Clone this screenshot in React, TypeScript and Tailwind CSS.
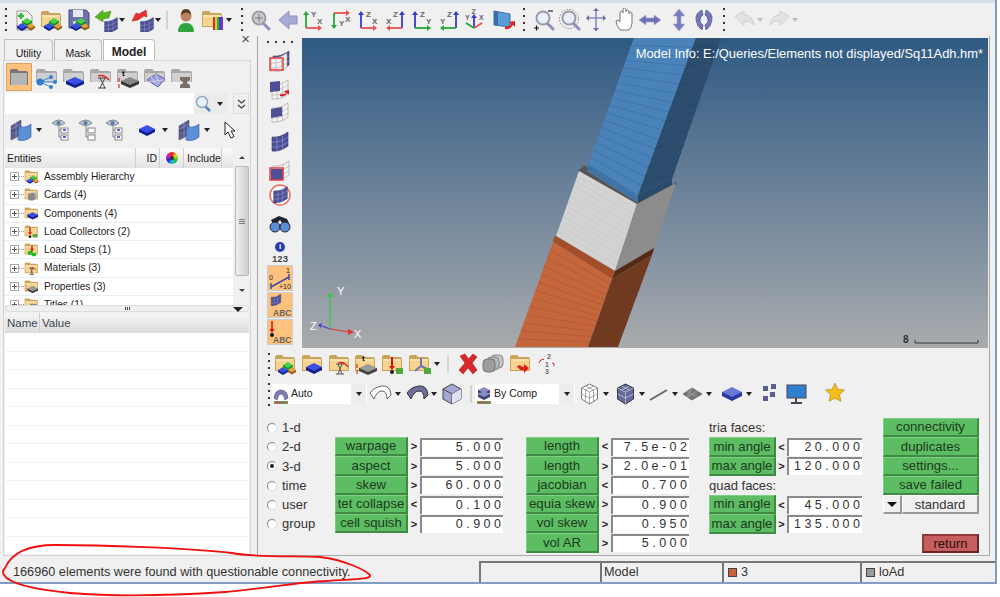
import React from "react";

type P = { className?: string };
const Svg = ({ w = 24, h = 24, vb, className, children }: { w?: number; h?: number; vb?: string; className?: string; children: React.ReactNode }) => (
  <svg width={w} height={h} viewBox={vb ?? `0 0 ${w} ${h}`} className={`shrink-0 ${className ?? ""}`}>{children}</svg>
);
const Box = ({ x, y, w = 6, h = 3, d = 3, c, k }: { x: number; y: number; w?: number; h?: number; d?: number; c: string; k: string }) => (
  <g>
    <path d={`M${x - w} ${y}V${y + d}L${x} ${y + h + d}L${x + w} ${y + d}V${y}Z`} fill={k} />
    <path d={`M${x - w} ${y}L${x} ${y - h}L${x + w} ${y}L${x} ${y + h}Z`} fill={c} />
  </g>
);
const Cubes = ({ s = 1 }: { s?: number }) => (
  <g transform={`scale(${s})`}>
    <Box x={14} y={13} w={5} h={3} d={2} c="#48d048" k="#168a20" />
    <Box x={9} y={18} w={5} h={3} d={2} c="#3a50e0" k="#101f90" />
    <Box x={18} y={18} w={4} h={2.5} d={2} c="#e0a040" k="#8a5a10" />
  </g>
);
const FolderShape = ({ c = "#f6d48e", e = "#c9a45c" }: { c?: string; e?: string }) => (
  <g>
    <path d="M1 5q0-2 2-2h5l2 2h9q2 0 2 2v12H1z" fill={e} />
    <path d="M2 7h18v11H2z" fill={c} />
    <path d="M2 8h18" stroke="#fff" strokeOpacity=".6" />
  </g>
);
const Mesh = ({ x = 0, y = 0, s = 1, ghost = false }: { x?: number; y?: number; s?: number; ghost?: boolean }) => (
  <g transform={`translate(${x} ${y}) scale(${s})`}>
    <path d="M2 7q8 1 16-5v14q-8 6-16 5z" fill={ghost ? "#f4f4f4" : "#4c4f95"} stroke={ghost ? "#999" : "#33366e"} strokeWidth=".6" />
    <path d="M7 7.5v14M12.5 6v14M2 12q8 1 16-5M2 17q8 1 16-5" stroke={ghost ? "#aaa" : "#9ea2d4"} strokeWidth=".6" fill="none" />
  </g>
);
const Flag = () => (
  <Svg w={24} h={24}>
    <path d="M2 8l10-6v7l-10 5zM2 14l10-5v8l-10 5z" fill="#5a5f90" stroke="#3b3f6c" strokeWidth=".5" />
    <path d="M7 5v14M2 11l10-5" stroke="#a6a9d2" strokeWidth=".5" />
    <path d="M10 8q6 3 12-2v13q-6 5-13 3z" fill="#5d8fd6" stroke="#2f5c9f" strokeWidth=".6" />
  </Svg>
);
const Caret = ({ className }: P) => (
  <span className={`w-0 h-0 border-l-[3.5px] border-r-[3.5px] border-t-[4px] border-l-transparent border-r-transparent border-t-[#222] shrink-0 ${className ?? ""}`} />
);
const Dots = ({ className, vert = true }: P & { vert?: boolean }) => (
  <span className={`flex shrink-0 ${vert ? "flex-col gap-[5px]" : "gap-[6px]"} ${className ?? ""}`}>
    <i className="block w-[2px] h-[2px] bg-[#333]" /><i className="block w-[2px] h-[2px] bg-[#333]" /><i className="block w-[2px] h-[2px] bg-[#333]" /><i className="block w-[2px] h-[2px] bg-[#333]" />
  </span>
);
const Sep = ({ className }: P) => <span className={`w-[2px] h-[18px] bg-[#d4d4d4] shrink-0 ${className ?? ""}`} />;

const Glass = ({ plus = false, dashed = false, rings = false }: { plus?: boolean; dashed?: boolean; rings?: boolean }) => (
  <Svg w={22} h={24}>
    {dashed && <circle cx="10" cy="11" r="9.5" fill="none" stroke="#555" strokeWidth=".7" strokeDasharray="1.5 1.5" />}
    <path d="M14 15l6 6" stroke="#8d8fc0" strokeWidth="3" strokeLinecap="round" />
    <circle cx="10" cy="10" r="6.5" fill={rings ? "#ccc" : "#e8eefc"} stroke="#9a9aa8" strokeWidth="2" />
    {rings && <path d="M10 6v8M6 10h8" stroke="#777" strokeWidth="1" />}
    {plus && <path d="M1 20h5M3.5 17.5v5" stroke="#111" strokeWidth="1.2" />}
    {plus && <path d="M15 3h5" stroke="#333" strokeWidth="1.3" />}
  </Svg>
);
const Axes = ({ v, h, vc, hc, flip = false }: { v: string; h: string; vc: string; hc: string; flip?: boolean }) => (
  <Svg w={21} h={24}>
    {flip ? (
      <g>
        <path d="M18 20V6" stroke={vc} strokeWidth="1.8" /><path d="M15 7l3-4 3 4z" fill={vc} />
        <path d="M18 20H5" stroke={hc} strokeWidth="1.8" /><path d="M6 17l-4 3 4 3z" fill={hc} />
        <text x="9" y="9" fontSize="8" fontWeight="700" fill="#666" fontFamily="Liberation Sans">{v}</text>
        <text x="2" y="16" fontSize="8" fontWeight="700" fill="#666" fontFamily="Liberation Sans">{h}</text>
      </g>
    ) : (
      <g>
        <path d="M3 20V6" stroke={vc} strokeWidth="1.8" /><path d="M0 7l3-4 3 4z" fill={vc} />
        <path d="M3 20h13" stroke={hc} strokeWidth="1.8" /><path d="M15 17l4 3-4 3z" fill={hc} />
        <text x="8" y="9" fontSize="8" fontWeight="700" fill="#666" fontFamily="Liberation Sans">{v}</text>
        <text x="14" y="16" fontSize="8" fontWeight="700" fill="#666" fontFamily="Liberation Sans">{h}</text>
      </g>
    )}
  </Svg>
);
const RED = "#e85050", GRN = "#22a83a", BLU = "#3a3ad0";

const TopBar = () => (
  <div className="h-[33px] flex items-center pl-[5px] shrink-0">
    <Dots />
    <span className="ml-[6px]"><Svg><path d="M4 3h10l5 5v14H4z" fill="#f4f4f0" stroke="#999" /><path d="M8 5v6M5 8h6" stroke="#3cb44a" strokeWidth="2.5" /><Cubes /></Svg></span>
    <span className="ml-[3px]"><Svg><FolderShape /><Cubes /></Svg></span>
    <span className="ml-[3px]"><Svg><path d="M2 2h17l3 3v15H2z" fill="#6d72a8" stroke="#44487a" /><path d="M6 2h10v7H6z" fill="#e8e8f0" /><path d="M6 13h9v8H6z" fill="#d0d0dc" /><Cubes /></Svg></span>
    <span className="ml-[3px]"><Svg w={26}><g transform="translate(9 8)"><Mesh s={0.8} /></g><path d="M1 9l8-7v3l8-2-2 7-6 1v3z" fill="#58b522" stroke="#3d8a14" strokeWidth=".5" /></Svg></span>
    <Caret className="ml-[-1px]" />
    <span className="ml-[5px]"><Svg w={26}><g transform="translate(9 8)"><Mesh s={0.8} /></g><path d="M2 13l4-8 3 1 7-4 1 7-3-1-6 4z" fill="#e83030" stroke="#a81c1c" strokeWidth=".5" /></Svg></span>
    <Caret className="ml-[-1px]" />
    <Sep className="ml-[5px]" />
    <span className="ml-[8px]"><Svg w={20}><circle cx="10" cy="8" r="5.5" fill="#b8835e" /><path d="M5 7q0-6 5-6t5 6q-2-3-5-2.5T5 7z" fill="#5c3518" /><path d="M2 24q0-9 8-9t8 9z" fill="#2fa43c" /></Svg></span>
    <span className="ml-[5px]"><Svg w={24}><FolderShape /><g><path d="M12 9h2v13h-2z" fill="#e02828" /><path d="M14 9h2v13h-2z" fill="#e8c820" /><path d="M16 9h2v13h-2z" fill="#28b038" /><path d="M18 9h2v13h-2z" fill="#2848e0" /><path d="M20 9h2v13h-2z" fill="#9028c0" /></g></Svg></span>
    <Caret className="ml-[1px]" />
    <Dots className="ml-[9px]" />
    <span className="ml-[6px]"><Glass rings /></span>
    <span className="ml-[7px]"><Svg w={20}><path d="M1 12L11 3v5h8v8h-8v5z" fill="#a9a9d8" stroke="#8d8dc0" /></Svg></span>
    <span className="ml-[5px]"><Axes v="Y" h="X" vc={GRN} hc={RED} /></span>
    <span className="ml-[7px]"><Svg w={21}><path d="M3 5v14" stroke={GRN} strokeWidth="1.8" /><path d="M0 17l3 4 3-4z" fill={GRN} /><path d="M3 5h13" stroke={RED} strokeWidth="1.8" /><path d="M15 2l4 3-4 3z" fill={RED} /><text x="8" y="18" fontSize="8" fontWeight="700" fill="#666" fontFamily="Liberation Sans">Y</text><text x="14" y="14" fontSize="8" fontWeight="700" fill="#666" fontFamily="Liberation Sans">X</text></Svg></span>
    <span className="ml-[6px]"><Axes v="Z" h="X" vc={BLU} hc={RED} /></span>
    <span className="ml-[5px]"><Axes v="Z" h="X" vc={BLU} hc={RED} flip /></span>
    <span className="ml-[7px]"><Axes v="Z" h="Y" vc={BLU} hc={GRN} /></span>
    <span className="ml-[5px]"><Axes v="Z" h="Y" vc={BLU} hc={GRN} flip /></span>
    <span className="ml-[5px]"><Svg w={21}><path d="M10 20V9" stroke={BLU} strokeWidth="1.8" /><path d="M7 10l3-4 3 4z" fill={BLU} /><path d="M10 20l8-5" stroke={RED} strokeWidth="1.8" /><path d="M10 20l-8-5" stroke={GRN} strokeWidth="1.8" /><text x="7.5" y="6" fontSize="7" fontWeight="700" fill="#666" fontFamily="Liberation Sans">Z</text><text x="1" y="12" fontSize="7" fontWeight="700" fill="#666" fontFamily="Liberation Sans">Y</text><text x="15" y="12" fontSize="7" fontWeight="700" fill="#666" fontFamily="Liberation Sans">X</text></Svg></span>
    <span className="ml-[8px]"><Svg w={23}><path d="M1 3l16 3v13l-16-2z" fill="#5a9bd8" stroke="#3d6fa8" /><path d="M1 3h4v14H1z" fill="#3a6ea8" /><path d="M12 21q5 1 8-4l2 2v-6l-6 1 2 2q-2 3-6 3z" fill="#e02020" /></Svg></span>
    <Dots className="ml-[7px]" />
    <span className="ml-[8px]"><Glass plus /></span>
    <span className="ml-[4px]"><Glass dashed /></span>
    <span className="ml-[5px]"><Svg w={20}><path d="M1 10h18M10 1v22" stroke="#8a8ac0" strokeWidth="1.6" /><path d="M3 7l-3 3 3 3zM17 7l3 3-3 3zM7 3l3-3 3 3zM7 20l3 3 3-3z" fill="#6a6aa8" /></Svg></span>
    <span className="ml-[8px]"><Svg w={21}><path d="M6 22q-4-5-4-9l2-1 2 2V5q0-2 1.500-2T9 5V2q0-2 1.500-2T12 2v2q0-2 1.500-2T15 4v2q0-2 1.500-2T18 6v9q0 4-3 7z" fill="#fff" stroke="#777" strokeWidth="1" /></Svg></span>
    <span className="ml-[4px]"><Svg w={22}><path d="M0 12l7-5v3h8V7l7 5-7 5v-3H7v3z" fill="#6f70b8" stroke="#a9a9d8" strokeWidth=".6" /></Svg></span>
    <span className="ml-[11px]"><Svg w={14}><path d="M7 1l6 7H9v8h4l-6 7-6-7h4V8H1z" fill="#7a7bbd" stroke="#a9a9d8" strokeWidth=".6" /></Svg></span>
    <span className="ml-[8px]"><Svg w={20}><path d="M8 2Q1 5 2 12t6 10l1-5q-3-2-3-5t3-5zM12 2q7 3 6 10t-6 10l-1-5q3-2 3-5t-3-5z" fill="#7476b8" stroke="#4d4f8a" strokeWidth=".6" /></Svg></span>
    <Dots className="ml-[9px]" />
    <span className="ml-[8px]"><Svg w={24}><path d="M2 8l9-5v4q9 0 10 10-4-5-10-4v5z" fill="#e2e4e4" stroke="#d0d2d2" /></Svg></span>
    <Caret className="opacity-25" />
    <span className="ml-[4px]"><Svg w={24}><path d="M22 8l-9-5v4q-9 0-10 10 4-5 10-4v5z" fill="#e2e4e4" stroke="#d0d2d2" /></Svg></span>
    <Caret className="ml-[1px] opacity-25" />
  </div>
);

const GF = ({ children }: { children?: React.ReactNode }) => (
  <Svg w={24} h={26}>
    <path d="M1 7q0-2 2-2h6l2 2h9q2 0 2 2v9H1z" fill="#a8a8a8" />
    <path d="M2 9h19v9H2z" fill="#cfcfcf" />
    {children}
  </Svg>
);
const PanelIcons = () => (
  <div className="h-[30px] flex items-center pl-[2px]">
    <span className="w-[26px] h-[28px] bg-[#fdc27e] border border-[#d8a566] flex items-center justify-center shrink-0">
      <Svg w={20} h={20}><path d="M1 4q0-2 2-2h5l2 2h7q2 0 2 2v12H1z" fill="#777" /><rect x="2" y="6" width="16" height="12" fill="#b5b5b5" /></Svg>
    </span>
    <span className="ml-[3px]"><GF><path d="M5 18L16 13M5 18h13M5 18l11 5" stroke="#2d7fd0" strokeWidth="1" /><circle cx="5" cy="18" r="3.500" fill="#2d7fd0" /><circle cx="16" cy="13" r="2" fill="#2d7fd0" /><circle cx="20" cy="18" r="2" fill="#2d7fd0" /><circle cx="16" cy="23" r="2" fill="#2d7fd0" /></GF></span>
    <span className="ml-[3px]"><GF><Box x={13} y={17} w={9} h={4} d={3} c="#3a4fe6" k="#101f90" /></GF></span>
    <span className="ml-[3px]"><GF><path d="M9 12q6-2 11 4" stroke="#e02020" strokeWidth="1.300" fill="none" /><path d="M9 14h8M9 24h8M11 14l5 10M16 14l-5 10" stroke="#444" strokeWidth="1" fill="none" /></GF></span>
    <span className="ml-[3px]"><GF><Box x={14} y={17} w={9} h={4} d={3} c="#888" k="#333" /><text x="6" y="12" fontSize="8" fontWeight="700" fontFamily="Liberation Sans">t</text><path d="M3 14v4M3 20v4" stroke="#d01010" /></GF></span>
    <span className="ml-[3px]"><GF><path d="M4 16l9-6 9 5-7 8z" fill="#9d9ee0" stroke="#6668a8" /><path d="M8 13l7 9M13 10l3 10M5 18l16-2" stroke="#eee" strokeWidth=".6" /></GF></span>
    <span className="ml-[3px]"><GF><path d="M10 13h10v3l-3 2v1l3 2v3H10v-3l3-2v-1l-3-2z" fill="#7a6f68" /></GF></span>
  </div>
);

const rowFill = [
  <Cubes />,
  <g><rect x="9" y="9" width="10" height="11" rx="3" fill="#aaa" /><rect x="6" y="10" width="10" height="11" rx="3" fill="#888" /></g>,
  <Box x={13} y={14} w={8} h={4} d={3} c="#3a4fe6" k="#101f90" />,
  <g><path d="M9 6v10" stroke="#e01010" strokeWidth="2" /><path d="M6 13l3 4 3-4z" fill="#e01010" /><circle cx="9" cy="20" r="2" fill="#222" /><rect x="13" y="16" width="7" height="5" fill="#50a840" /></g>,
  <g><path d="M12 6v8" stroke="#e01010" strokeWidth="2" /><path d="M9 11l3 4 3-4z" fill="#e01010" /><rect x="6" y="14" width="7" height="6" fill="#20c020" /><rect x="12" y="17" width="6" height="5" fill="#20c020" /></g>,
  <g><path d="M9 11q5-2 9 3" stroke="#e02020" fill="none" strokeWidth="1.300" /><path d="M8 12h7M8 21h7M10 12l3 9M13 12l-3 9" stroke="#444" fill="none" /></g>,
  <g><Box x={13} y={15} w={8} h={4} d={3} c="#999" k="#444" /><path d="M3 10v10" stroke="#d01010" strokeDasharray="2 2" /></g>,
  <rect x="9" y="11" width="10" height="8" fill="#888" />,
];
const rows = ["Assembly Hierarchy", "Cards (4)", "Components (4)", "Load Collectors (2)", "Load Steps (1)", "Materials (3)", "Properties (3)", "Titles (1)"];

const Tab = ({ t, on, className }: { t: string; on?: boolean; className?: string }) => (
  <div className={`h-[21px] border-t border-l border-r border-[#bdbdbd] rounded-tr-[4px] flex items-end justify-center text-[#222] ${on ? "bg-white font-bold text-[12px] leading-[16px]" : "bg-[#f0f0f0] text-[10.500px] leading-[13px]"} ${className ?? ""}`}>{t}</div>
);

const LeftPanel = () => (
  <div className="w-[257px] shrink-0 flex flex-col pl-[3px] pr-[6px]">
    <div className="h-[24px] flex items-end pl-[1px] relative shrink-0">
      <Tab t="Utility" className="w-[49px]" />
      <Tab t="Mask" className="w-[48px] ml-[1px]" />
      <Tab t="Model" on className="w-[52px] ml-[1px]" />
      <span className="ml-auto self-start text-[15px] leading-[12px] mt-[-3px] mr-[1px] text-[#555]">×</span>
    </div>
    <div className="flex-1 border border-[#d6d6d6] flex flex-col min-h-0 bg-[#f0f0f0]">
      <div className="pt-[1px]"><PanelIcons /></div>
      <div className="h-[21px] mt-[1px] flex items-center ml-[1px] mr-[1px]">
        <div className="w-[192px] h-full bg-white" />
        <span className="w-[19px] h-full bg-[#ebebeb] flex items-center justify-center"><Svg w={16} h={17}><path d="M10 11l5 5" stroke="#5a80c8" strokeWidth="2.500" /><circle cx="7" cy="7" r="5.500" fill="#e4f0fb" stroke="#9ab" strokeWidth="1.500" /></Svg></span>
        <span className="w-[16px] h-full bg-[#ebebeb] flex items-center justify-center"><Caret /></span>
        <span className="w-[16px] h-full ml-[5px] border border-[#ddd] flex items-center justify-center"><Svg w={9} h={10}><path d="M1 1l3.500 3L8 1M1 6l3.500 3L8 6" stroke="#444" strokeWidth="1.200" fill="none" /></Svg></span>
      </div>
      <div className="h-[27px] mt-[2px] flex items-center pl-[5px]">
        <Flag /><Caret className="ml-[3px]" />
        {[0, 1, 2].map((i) => (
          <span key={i} className={i === 0 ? "ml-[8px]" : "ml-[3px]"}>
            <Svg w={24} h={24}><path d="M2 5q7-6 13 0-6 5-13 0z" fill="#b6c6dc" stroke="#888" /><circle cx="8.500" cy="5" r="2" fill="#5878a8" /><rect x="11" y="10" width="7" height="5" fill="#fff" stroke="#888" /><rect x="11" y="17" width="7" height="5" fill="#fff" stroke="#888" />{i !== 1 && <path d="M13 12h3M13 19h3" stroke="#2030d0" strokeWidth="1.500" />}<path d="M9 8v11h2M9 12h2" stroke="#888" fill="none" /></Svg>
          </span>
        ))}
        <span className="ml-[9px]"><Svg w={20} h={20}><Box x={10} y={9} w={8} h={4} d={3} c="#3a4fe6" k="#101f90" /></Svg></span>
        <Caret className="ml-[5px]" />
        <span className="ml-[9px]"><Flag /></span>
        <Caret className="ml-[3px]" />
        <span className="ml-[13px]"><Svg w={14} h={20}><path d="M2 2v13l3-3 3 6 3-1.500-3-5.500h4z" fill="#fff" stroke="#222" /></Svg></span>
      </div>
      <div className="mt-[5px] flex h-[157px] shrink-0">
        <div className="w-[230px] ml-[1px] flex flex-col min-w-0">
          <div className="h-[20px] flex text-[10.500px] text-[#222] bg-linear-to-b from-[#fafafa] to-[#e4e4e4] shrink-0">
            <span className="w-[131px] border-r border-[#cfcfcf] pl-[2px] leading-[20px]">Entities</span>
            <span className="w-[24px] border-r border-[#cfcfcf] text-right pr-[2px] leading-[20px]">ID</span>
            <span className="w-[24px] border-r border-[#cfcfcf] flex items-center justify-center"><span className="w-[12px] h-[12px] rounded-full bg-[conic-gradient(#e02020,#e0e020,#20c020,#20c0e0,#2020e0,#e020c0,#e02020)] flex items-center justify-center"><i className="block w-[4px] h-[4px] rounded-full bg-[#333]" /></span></span>
            <span className="w-[38px] border-r border-[#cfcfcf] pl-[3px] leading-[20px]">Include</span>
          </div>
          <div className="flex-1 bg-white overflow-hidden relative">
            {rows.map((r, i) => (
              <div key={r} className="h-[18.300px] flex items-center border-b border-[#e6f0f8] pl-[5px] text-[10.200px] text-[#222]">
                <span className="w-[9px] h-[9px] border border-[#aaa] flex items-center justify-center shrink-0"><Svg w={7} h={7}><path d="M1 3.500h5M3.500 1v5" stroke="#555" /></Svg></span>
                <span className="w-[5px] border-t border-dotted border-[#999] shrink-0" />
                <Svg w={16} h={17} vb="0 0 24 24"><FolderShape />{rowFill[i]}</Svg>
                <span className="ml-[4px] whitespace-nowrap">{r}</span>
              </div>
            ))}
          </div>
        </div>
        <div className="w-[16px] ml-[1px] flex flex-col items-center">
          <span className="h-[18px] flex items-center"><span className="w-0 h-0 border-l-[3px] border-r-[3px] border-b-[3px] border-l-transparent border-r-transparent border-b-[#444]" /></span>
          <div className="w-[14px] h-[110px] rounded-[2px] border border-[#b8b8b8] bg-linear-to-r from-[#eee] to-[#d0d0d0] flex flex-col items-center justify-center gap-[1px]"><i className="block w-[6px] h-[1px] bg-[#777]" /><i className="block w-[6px] h-[1px] bg-[#777]" /><i className="block w-[6px] h-[1px] bg-[#777]" /></div>
          <span className="flex-1 flex items-center"><span className="w-0 h-0 border-l-[3px] border-r-[3px] border-t-[3px] border-l-transparent border-r-transparent border-t-[#444]" /></span>
        </div>
      </div>
      <div className="h-[7px] mx-[1px] border border-[#ddd] rounded-[3px] flex items-center justify-center relative shrink-0">
        <span className="flex gap-[1px]"><i className="block w-[1px] h-[3px] bg-[#444]" /><i className="block w-[1px] h-[3px] bg-[#444]" /><i className="block w-[1px] h-[3px] bg-[#444]" /></span>
        <span className="absolute right-[5px] top-[1px] w-0 h-0 border-l-[5px] border-r-[5px] border-t-[5px] border-l-transparent border-r-transparent border-t-[#222]" />
      </div>
      <div className="h-[20px] mt-[1px] flex text-[11.500px] text-[#3a4552] bg-linear-to-b from-[#f6f6f6] to-[#dcdcdc] shrink-0 mx-[1px]">
        <span className="w-[35px] border-r border-[#cfcfcf] pl-[2px] leading-[20px]">Name</span>
        <span className="pl-[2px] leading-[20px]">Value</span>
      </div>
      <div className="flex-1 mx-[1px] bg-white flex flex-col">
        {Array.from({ length: 12 }).map((_, i) => <div key={i} className="h-[18.500px] border-b border-[#f3f3f3]" />)}
      </div>
    </div>
  </div>
);

const VT = () => (
  <div className="w-[44px] shrink-0 flex flex-col items-center">
    <Dots vert={false} className="mt-[3px]" />
    <span className="mt-[5px]"><Svg><Mesh x={3} y={1} /><Mesh x={1} y={3} ghost /><rect x="2" y="10" width="13" height="12" fill="none" stroke="#e83c3c" strokeWidth="1.500" /></Svg></span>
    <span className="mt-[5px]"><Svg><Mesh x={2} y={1} ghost /><path d="M2 5l10-1v10L2 15z" fill="#4c4f95" /><path d="M12 19q5 1 7-3l2 2v-5l-5 1 2 2q-2 2-6 1z" fill="#e02020" /></Svg></span>
    <span className="mt-[-1px]"><Svg><Mesh x={2} y={1} ghost /><path d="M3 9l11-2v9L3 18z" fill="#4c4f95" /></Svg></span>
    <span className="mt-[5px]"><Svg><Mesh x={2} y={1} /></Svg></span>
    <span className="mt-[5px]"><Svg><Mesh x={3} y={1} ghost /><path d="M3 11h12v11H3z" fill="#4c4f95" /><rect x="2" y="10" width="13" height="12" fill="none" stroke="#e83c3c" strokeWidth="1.500" /></Svg></span>
    <span className="mt-[1px]"><Svg><circle cx="12" cy="12" r="10" fill="#fff" stroke="#e87060" strokeWidth="1.500" /><Mesh x={4} y={2} s={0.85} /></Svg></span>
    <span className="mt-[4px]"><Svg><path d="M3 9L11 5l2 3-7 7z" fill="#223" /><path d="M11 5l8 3 3 6-9-3z" fill="#223" /><circle cx="7" cy="16" r="5" fill="#5a90d8" stroke="#223" /><circle cx="17" cy="16" r="5" fill="#5a90d8" stroke="#223" /></Svg></span>
    <span className="mt-[7px] w-[10px] h-[10px] rounded-full bg-[#2a3cb0] text-white text-[8px] font-bold leading-[10px] text-center">i</span>
    <span className="text-[9.500px] font-bold text-[#444] leading-[11px] mt-[1px]">123</span>
    <span className="mt-[1px] w-[26px] h-[26px] bg-[#fdc27e] border border-[#ccc] shrink-0"><Svg w={24} h={24}><path d="M3 21L21 11" stroke="#3a4fa0" strokeWidth="1.500" /><path d="M3 17v6M21 8v6" stroke="#3a4fa0" strokeWidth="1.500" /><text x="1" y="14" fontSize="7" fill="#222" fontFamily="Liberation Sans">0</text><text x="18" y="7" fontSize="7" fill="#222" fontFamily="Liberation Sans">1</text><text x="11" y="23" fontSize="7" fill="#222" fontFamily="Liberation Sans">+10</text></Svg></span>
    <span className="mt-[1px] w-[26px] h-[26px] bg-[#fdc27e] border border-[#ccc] shrink-0"><Svg w={24} h={24}><g transform="translate(2 0) scale(.6)"><Mesh /></g><text x="5" y="23" fontSize="8.500" fontWeight="700" fill="#666" fontFamily="Liberation Sans">ABC</text></Svg></span>
    <span className="mt-[1px] w-[26px] h-[26px] bg-[#fdc27e] border border-[#ccc] shrink-0"><Svg w={24} h={24}><path d="M4 1v11" stroke="#e01010" strokeWidth="1.500" /><path d="M1.500 9L4 13l2.500-4z" fill="#e01010" /><circle cx="4" cy="15" r="2" fill="#111" /><text x="5" y="23" fontSize="8.500" fontWeight="700" fill="#666" fontFamily="Liberation Sans">ABC</text></Svg></span>
  </div>
);

const stripes = (a: number[], b: number[], c: number[], d: number[], n: number, col: string) =>
  Array.from({ length: n }).map((_, i) => {
    const t = (i + 1) / (n + 1);
    return <line key={i} x1={a[0] + (d[0] - a[0]) * t} y1={a[1] + (d[1] - a[1]) * t} x2={b[0] + (c[0] - b[0]) * t} y2={b[1] + (c[1] - b[1]) * t} stroke={col} strokeWidth=".6" />;
  });

const Viewport = () => (
  <div className="relative w-[686px] h-[310px] bg-linear-to-b from-[#2e5a83] to-[#a9abad] overflow-hidden shrink-0">
    <svg width="686" height="310" viewBox="302 39 686 310" className="absolute left-0 top-0">
      <path d="M634 39h62l-58 157-50-30z" fill="#4a82ba" />
      {stripes([634, 39], [696, 39], [638, 196], [588, 166], 16, "#3a6c9c")}
      <path d="M696 39h25l-49 141-34 16z" fill="#2d4d6e" />
      {stripes([696, 39], [721, 39], [672, 180], [638, 196], 16, "#264460")}
      <path d="M588 165l50 31v8l-51-33z" fill="#3d75a8" />
      <path d="M638 196l34-16v6l-34 18z" fill="#2a4a69" />
      <path d="M578 172l6-6 4 3-1 3 51 32 35-19 3-2 1 2-40 23z" fill="#555" />
      <path d="M579 172l58 33-22 67-59-35z" fill="#d3d3d3" />
      {stripes([579, 172], [637, 205], [615, 272], [556, 237], 12, "#c6c6c6")}
      <path d="M637 205l39-21-22 65-39 23z" fill="#8c8c8c" />
      <path d="M554 238l2-1 59 35-3 8-59-37z" fill="#a44e2a" />
      <path d="M615 272l39-23-2 7-40 24z" fill="#552a15" />
      <path d="M553 243l59 37-24 68h-73z" fill="#c4653c" />
      {stripes([553, 243], [612, 280], [588, 348], [515, 348], 12, "#a8552f")}
      <path d="M612 280l40-24-34 92h-30z" fill="#6f3a20" />
      <g strokeWidth="1.200" fill="none">
        <path d="M330 330V295" stroke="#33c848" /><path d="M327 298l3-5 3 5z" fill="#33c848" stroke="none" />
        <path d="M330 330l20 3" stroke="#e83030" /><path d="M348 330l6 3-6 3z" fill="#e83030" stroke="none" />
        <path d="M330 330l-8 -3" stroke="#3f3fe0" /><path d="M322 324l-4 2 3 3z" fill="#3f3fe0" stroke="none" />
      </g>
      <text x="337" y="296" fontSize="11" fill="#fff" fontFamily="Liberation Sans">Y</text>
      <text x="354" y="339" fontSize="11" fill="#fff" fontFamily="Liberation Sans">X</text>
      <text x="310" y="331" fontSize="11" fill="#fff" fontFamily="Liberation Sans">Z</text>
      <path d="M915 341v3h63v-3" stroke="#333" fill="none" />
      <text x="903" y="344" fontSize="10" fontWeight="700" fill="#333" fontFamily="Liberation Sans">8</text>
    </svg>
    <span className="absolute right-[5px] top-[8px] text-[12.900px] leading-[16px] text-white whitespace-nowrap">Model Info: E:/Queries/Elements not displayed/Sq11Adh.hm*</span>
  </div>
);

const FF = ({ children }: { children: React.ReactNode }) => (
  <Svg w={24} h={24}><FolderShape />{children}</Svg>
);
const Combo = ({ t, w, icon, className }: { t: string; w: string; icon: React.ReactNode; className?: string }) => (
  <div className={`h-[20px] bg-white border-r border-white flex items-center pl-[1px] text-[10.500px] text-[#222] shrink-0 ${w} ${className ?? ""}`}>
    <Svg w={18} h={20}>{icon}<path d="M1 17h14v3H1z" fill="#8a8a50" /><path d="M3 18h2v1H3zM6 18h2v1H6z" fill="#e02080" /><path d="M9 18h2v1H9z" fill="#2080e0" /></Svg>
    <span>{t}</span>
    <span className="ml-auto w-[15px] h-full bg-[#ececec] flex items-center justify-center"><Caret /></span>
  </div>
);

const Toolbars = () => (
  <div className="flex flex-col shrink-0">
    <div className="h-[26px] mt-[3px] flex items-center pl-[10px]">
      <Dots />
      <span className="ml-[4px]"><FF><Cubes /></FF></span>
      <span className="ml-[3px]"><FF><Box x={13} y={15} w={8} h={4} d={3} c="#3a4fe6" k="#101f90" /></FF></span>
      <span className="ml-[3px]"><FF><path d="M10 11q6-2 10 4" stroke="#e02020" fill="none" strokeWidth="1.300" /><path d="M8 12h8M8 22h8M10 12l4 10M14 12l-4 10" stroke="#555" fill="none" /></FF></span>
      <span className="ml-[2px]"><FF><Box x={14} y={16} w={9} h={4} d={3} c="#999" k="#444" /><text x="8" y="9" fontSize="8" fontWeight="700" fontFamily="Liberation Sans">t</text><path d="M3 12v4M3 18v4" stroke="#d01010" /></FF></span>
      <span className="ml-[3px]"><FF><path d="M11 5v12" stroke="#e01010" strokeWidth="2" /><path d="M8 14l3 4 3-4z" fill="#e01010" /><circle cx="11" cy="20" r="2" fill="#222" /><rect x="15" y="16" width="7" height="6" fill="#50a840" /></FF></span>
      <span className="ml-[3px]"><FF><path d="M13 14V6M13 14l-6 5M13 14l6 3" stroke="#6f73b8" strokeWidth="2" /><rect x="16" y="16" width="7" height="6" fill="#50a840" /></FF></span>
      <Caret className="ml-[2px]" />
      <Sep className="ml-[7px]" />
      <span className="ml-[8px]"><Svg w={22}><path d="M3 4l5-2 3.500 5L16 2l4 3-5 6 5 7-4 4-5-6-5 6-4-4 6-7z" fill="#d82828" stroke="#a81c1c" strokeWidth=".6" /></Svg></span>
      <span className="ml-[3px]"><Svg w={22}><rect x="9" y="3" width="12" height="13" rx="4" fill="#c6c6c6" stroke="#888" /><rect x="5" y="5" width="12" height="13" rx="4" fill="#b4b4b4" stroke="#888" /><rect x="1" y="7" width="12" height="13" rx="4" fill="#9c9c9c" stroke="#777" /></Svg></span>
      <span className="ml-[5px]"><Svg w={24}><FolderShape /><path d="M8 14q2 5 7 4v3l5-5-5-4v3q-3 0-4-2z" fill="#e02020" /></Svg></span>
      <span className="ml-[4px]"><Svg w={20}><text x="10" y="7" fontSize="7" fontWeight="700" fill="#666" fontFamily="Liberation Sans">2</text><text x="8" y="14.500" fontSize="7" fontWeight="700" fill="#666" fontFamily="Liberation Sans">1</text><text x="8" y="22" fontSize="7" fontWeight="700" fill="#666" fontFamily="Liberation Sans">3</text><path d="M2 11q1-4 5-4M17 14q1-3-2-3" stroke="#e02020" fill="none" /></Svg></span>
    </div>
    <div className="h-[26px] mt-[4px] flex items-center pl-[10px]">
      <Dots />
      <Combo t="Auto" w="w-[95px]" className="ml-[2px]" icon={<path d="M1 14q1-8 7-8t7 8l-3 2q-1-6-4-6t-4 6z" fill="#7a7db8" stroke="#444878" strokeWidth=".6" />} />
      <span className="ml-[2px]"><Svg w={23}><path d="M1 11q4-6 12-7t9 9l-4 4q0-8-5-8T5 17z" fill="#fff" stroke="#666" /></Svg></span>
      <Caret className="ml-[3px]" />
      <span className="ml-[5px]"><Svg w={23}><path d="M1 11q4-6 12-7t9 9l-4 4q0-8-5-8T5 17z" fill="#6c6f99" stroke="#333" /></Svg></span>
      <Caret className="ml-[2px]" />
      <span className="ml-[4px]"><Svg w={22}><path d="M11 2l9 5v10l-9 5-9-5V7z" fill="#a5a7d6" stroke="#444" /><path d="M2 7l9 5 9-5M11 12v10" stroke="#444" fill="none" /><path d="M11 12l9-5v10l-9 5z" fill="#dfe0f0" /></Svg></span>
      <Sep className="ml-[7px]" />
      <Combo t="By Comp" w="w-[100px]" className="ml-[3px]" icon={<g><Box x={8} y={6} w={6} h={3} d={3} c="#8a8cc0" k="#40427a" /><Box x={8} y={10} w={6} h={3} d={3} c="#8a8cc0" k="#40427a" /></g>} />
      <span className="ml-[4px]"><Svg w={21}><path d="M10.500 2l8 4v11l-8 5-8-5V6z" fill="#fff" stroke="#777" /><path d="M2.500 6l8 4 8-4M10.500 10v12M6.500 4l8 4M14.500 4l-8 4M2.500 12l8 4 8-4M6.500 8v11M14.500 8v11" stroke="#888" strokeWidth=".7" fill="none" /></Svg></span>
      <Caret className="ml-[3px]" />
      <span className="ml-[6px]"><Svg w={21}><path d="M10.500 2l8 4v11l-8 5-8-5V6z" fill="#666a9c" stroke="#333" /><path d="M2.500 6l8 4 8-4M10.500 10v12M6.500 4l8 4M14.500 4l-8 4M2.500 12l8 4 8-4" stroke="#ccd" strokeWidth=".7" fill="none" /></Svg></span>
      <Caret className="ml-[3px]" />
      <span className="ml-[3px]"><Svg w={21}><path d="M2 18L19 8" stroke="#666" strokeWidth="2" /></Svg></span>
      <Caret className="ml-[3px]" />
      <span className="ml-[4px]"><Svg w={21}><path d="M1 12l9-6 10 6-10 6z" fill="#777" stroke="#444" strokeWidth=".6" /><path d="M5 9l10 6M10 6l-5 9M15 9L6 15" stroke="#bbb" strokeWidth=".6" /></Svg></span>
      <Caret className="ml-[3px]" />
      <span className="ml-[9px]"><Svg w={22}><Box x={11} y={10} w={10} h={5} d={4} c="#6c78d8" k="#2838a0" /></Svg></span>
      <Caret className="ml-[3px]" />
      <span className="ml-[10px]"><Svg w={15}><rect x="1" y="4" width="5" height="5" fill="#5a5f90" /><rect x="9" y="2" width="5" height="5" fill="#5a5f90" /><rect x="8" y="10" width="5" height="5" fill="#5a5f90" /><rect x="1" y="14" width="5" height="5" fill="#5a5f90" /></Svg></span>
      <span className="ml-[9px]"><Svg w={21}><rect x="1" y="3" width="19" height="13" fill="#2f7fcf" stroke="#445" /><path d="M10 16v4M5 21h11" stroke="#445" strokeWidth="2" /></Svg></span>
      <span className="ml-[18px]"><Svg w={20}><path d="M10 1l2.800 6.200 6.700.8-5 4.600 1.400 6.600L10 16.200 4.100 19.200l1.400-6.600-5-4.600 6.700-.8z" fill="#f4bf1c" stroke="#a87a10" strokeWidth=".6" /></Svg></span>
    </div>
  </div>
);

const Radio = ({ t, on }: { t: string; on?: boolean }) => (
  <div className="h-[19.300px] flex items-center text-[13px] text-[#333]">
    <span className="w-[10px] h-[10px] rounded-full bg-white border border-[#888] border-r-[#ddd] border-b-[#ddd] flex items-center justify-center">
      {on && <i className="block w-[4px] h-[4px] rounded-full bg-[#222]" />}
    </span>
    <span className="ml-[5px]">{t}</span>
  </div>
);
const GBtn = ({ t, w = "w-[73px]" }: { t: string; w?: string }) => (
  <span className={`h-[19.300px] ${w} bg-[#5dbd62] border-t border-l border-[#7fcf84] border-r-2 border-b-2 border-r-[#3f8a45] border-b-[#3f8a45] flex items-center justify-center text-[13.200px] text-[#1c3a20] whitespace-nowrap shrink-0`}>{t}</span>
);
const In = ({ v, w }: { v: string; w: string }) => (
  <span className={`h-[18px] ${w} bg-white border-t-2 border-l-2 border-t-[#8a8a8a] border-l-[#8a8a8a] text-right pr-[2px] text-[12.500px] leading-[15px] text-[#333] whitespace-pre shrink-0`}>{v}</span>
);
const Row = ({ t, s, v, w, gap }: { t: string; s: string; v: string; w: string; gap: string }) => (
  <div className="h-[19.300px] flex items-center">
    <GBtn t={t} w={w === "w-[75px]" ? "w-[67px]" : "w-[73px]"} />
    <span className={`${gap} text-[11px] font-bold text-[#222] text-center shrink-0`}>{s}</span>
    <In v={v} w={w} />
  </div>
);

const Form = () => (
  <div className="flex-1 flex relative pl-[9px] min-h-0 pt-[3px]">
    <div className="w-[68px] pt-[8px] shrink-0">
      {["1-d", "2-d", "3-d", "time", "user", "group"].map((r) => <Radio key={r} t={r} on={r === "3-d"} />)}
    </div>
    <div className="pt-[27px] w-[191px] shrink-0">
      <Row t="warpage" s=">" v="5 . 0 0 0" w="w-[83px]" gap="w-[12px]" />
      <Row t="aspect" s=">" v="5 . 0 0 0" w="w-[83px]" gap="w-[12px]" />
      <Row t="skew" s=">" v="6 0 . 0 0 0" w="w-[83px]" gap="w-[12px]" />
      <Row t="tet collapse" s="<" v="0 . 1 0 0" w="w-[83px]" gap="w-[12px]" />
      <Row t="cell squish" s=">" v="0 . 9 0 0" w="w-[83px]" gap="w-[12px]" />
    </div>
    <div className="pt-[27px] w-[183px] shrink-0">
      <Row t="length" s="<" v="7 . 5 e - 0 2" w="w-[78px]" gap="w-[12px]" />
      <Row t="length" s=">" v="2 . 0 e - 0 1" w="w-[78px]" gap="w-[12px]" />
      <Row t="jacobian" s="<" v="0 . 7 0 0" w="w-[78px]" gap="w-[12px]" />
      <Row t="equia skew" s=">" v="0 . 9 0 0" w="w-[78px]" gap="w-[12px]" />
      <Row t="vol skew" s=">" v="0 . 9 5 0" w="w-[78px]" gap="w-[12px]" />
      <Row t="vol AR" s=">" v="5 . 0 0 0" w="w-[78px]" gap="w-[12px]" />
    </div>
    <div className="pt-[8px] w-[174px] shrink-0">
      <div className="h-[19.300px] text-[13px] leading-[19px] text-[#333]">tria faces:</div>
      <Row t="min angle" s="<" v="2 0 . 0 0 0" w="w-[75px]" gap="w-[11px]" />
      <Row t="max angle" s=">" v="1 2 0 . 0 0 0" w="w-[75px]" gap="w-[11px]" />
      <div className="h-[19.300px] text-[13px] leading-[19px] text-[#333]">quad faces:</div>
      <Row t="min angle" s="<" v="4 5 . 0 0 0" w="w-[75px]" gap="w-[11px]" />
      <Row t="max angle" s=">" v="1 3 5 . 0 0 0" w="w-[75px]" gap="w-[11px]" />
    </div>
    <div className="pt-[8px] w-[96px] shrink-0 flex flex-col">
      <GBtn t="connectivity" w="w-[96px]" />
      <GBtn t="duplicates" w="w-[96px]" />
      <GBtn t="settings..." w="w-[96px]" />
      <GBtn t="save failed" w="w-[96px]" />
      <div className="h-[19.300px] flex">
        <span className="w-[19px] border-t border-l border-white border-r-2 border-b-2 border-r-[#999] border-b-[#999] flex items-center justify-center"><span className="w-0 h-0 border-l-[5px] border-r-[5px] border-t-[5px] border-l-transparent border-r-transparent border-t-[#111]" /></span>
        <span className="flex-1 border-t border-l border-white border-r-2 border-b-2 border-r-[#999] border-b-[#999] text-[13px] text-[#333] flex items-center justify-center">standard</span>
      </div>
      <div className="self-end mt-[20px] w-[57px] h-[19px] bg-[#c65d5e] border-2 border-[#8f3a3a] border-r-[#6b2525] border-b-[#6b2525] text-[13px] leading-[15px] text-center text-[#2a1010]">return</div>
    </div>
  </div>
);

const Cell = ({ w, children }: { w: string; children?: React.ReactNode }) => (
  <div className={`${w} h-[21px] border-t-2 border-l-2 border-t-[#777] border-l-[#777] flex items-center pl-[1px] text-[12.700px] text-[#333] shrink-0`}>{children}</div>
);

export default function App() {
  return (
    <div className="relative w-[1000px] h-[597px] bg-white overflow-hidden font-['Liberation_Sans',Arial,sans-serif]">
      <div className="w-[997px] h-[584px] bg-[#f0f0f0] flex flex-col border-b-2 border-r-2 border-b-[#7f9cc4] border-r-[#7f9cc4]">
        <div className="h-[3px] bg-[#d3deeb] shrink-0" />
        <TopBar />
        <div className="flex flex-1 min-h-0">
          <LeftPanel />
          <div className="w-[733px] shrink-0 border-l border-b border-r border-[#a8a8a8] flex flex-col pt-[2px]">
            <div className="flex shrink-0">
              <VT />
              <Viewport />
            </div>
            <Toolbars />
            <Form />
          </div>
        </div>
        <div className="h-[24px] mt-[2px] flex items-end shrink-0">
          <div className="w-[479px] h-[21px] pl-[13px] text-[12.700px] leading-[23px] text-[#333] whitespace-nowrap shrink-0">166960 elements were found with questionable connectivity.</div>
          <Cell w="w-[121px]" />
          <Cell w="w-[122px]"><span className="pl-[1px]">Model</span></Cell>
          <Cell w="w-[138px]"><span className="w-[9px] h-[9px] bg-[#c9623a] border border-[#444] ml-[3px] mr-[4px]" />3</Cell>
          <Cell w="w-[135px]"><span className="w-[9px] h-[9px] bg-[#999] border border-[#444] ml-[3px] mr-[4px]" />loAd</Cell>
        </div>
      </div>
      <svg width="380" height="57" viewBox="0 540 380 57" className="absolute left-0 top-[540px] pointer-events-none">
        <path d="M5 568C12 552 30 545 55 545C100 545 190 548 232 553C250 557 290 556 320 557C345 560 365 570 370 575C372 580 350 579 325 581C300 582 270 588 225 592C180 595 120 597 70 593C40 590 10 585 4 575C2 572 3 570 5 568Z" fill="none" stroke="#f01010" strokeWidth="1.800" />
      </svg>
    </div>
  );
}
